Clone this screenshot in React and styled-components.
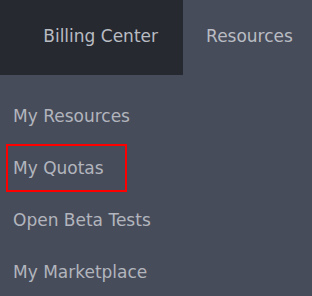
import React from "react";
import styled, { createGlobalStyle } from "styled-components";

const Global = createGlobalStyle`
  html, body { margin: 0; padding: 0; }
  body { background: #474c5a; font-family: "DejaVu Sans", "Open Sans", sans-serif; }
`;

const Page = styled.div`
  width: 312px;
  height: 296px;
  background: #474c5a;
  overflow: hidden;
`;

const TopBar = styled.div`
  display: flex;
  height: 75px;
`;

const Tab = styled.div`
  display: flex;
  align-items: center;
  justify-content: ${(p) => (p.$active ? "center" : "flex-end")};
  width: ${(p) => p.$w}px;
  box-sizing: border-box;
  padding-right: ${(p) => p.$pr || 0}px;
  padding-left: ${(p) => p.$pl || 0}px;
  background: ${(p) => (p.$active ? "#474c5a" : "#262930")};
  color: #b9bcc3;
  font-size: 17px;
  padding-bottom: 3px;
`;

const Menu = styled.ul`
  list-style: none;
  margin: 0;
  padding: 17px 0 0 6px;
  display: flex;
  flex-direction: column;
  gap: 4px;
`;

const Item = styled.li`
  box-sizing: border-box;
  width: 121px;
  height: 48px;
  display: flex;
  align-items: center;
  padding-left: 5px;
  color: #b2b5bd;
  font-size: 17px;
  white-space: nowrap;
  border: 2px solid ${(p) => (p.$highlight ? "#ff0000" : "transparent")};
`;

export default function App() {
  const items = ["My Resources", "My Quotas", "Open Beta Tests", "My Marketplace"];
  return (
    <Page>
      <Global />
      <TopBar>
        <Tab $w={183} $pr={25}>Billing Center</Tab>
        <Tab $w={129} $pl={4} $active>Resources</Tab>
      </TopBar>
      <Menu>
        {items.map((t) => (
          <Item key={t} $highlight={t === "My Quotas"}>{t}</Item>
        ))}
      </Menu>
    </Page>
  );
}
